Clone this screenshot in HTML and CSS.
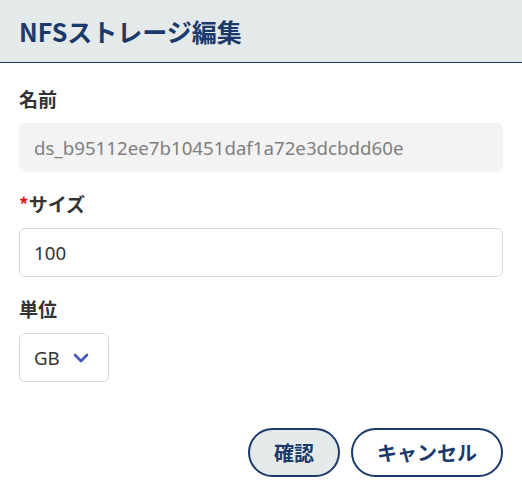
FILE: index.html
```html
<!DOCTYPE html>
<html lang="ja">
<head>
<meta charset="utf-8">
<title>NFSストレージ編集</title>
<link rel="stylesheet" href="styles.css">
</head>
<body>
<div class="dialog">
  <header class="dialog-header">
    <h1 class="dialog-title">NFSストレージ編集</h1>
  </header>
  <main class="dialog-body">
    <div class="field">
      <label class="field-label">名前</label>
      <div class="input input-disabled">ds_b95112ee7b10451daf1a72e3dcbdd60e</div>
    </div>
    <div class="field">
      <label class="field-label"><span class="required">*</span>サイズ</label>
      <div class="input">100</div>
    </div>
    <div class="field">
      <label class="field-label">単位</label>
      <div class="select">
        <span class="select-value">GB</span>
        <svg class="chevron" width="16" height="10" viewBox="0 0 16 10"><path d="M2 2 L8 8 L14 2" fill="none" stroke="#4357b8" stroke-width="2.6" stroke-linecap="round" stroke-linejoin="round"/></svg>
      </div>
    </div>
  </main>
  <footer class="dialog-footer">
    <button class="btn btn-primary">確認</button>
    <button class="btn">キャンセル</button>
  </footer>
</div>
</body>
</html>
```
FILE: styles.css
```css
html, body {
  margin: 0;
  padding: 0;
  background: #ffffff;
}
body {
  font-family: "Noto Sans", "Noto Sans CJK JP", sans-serif;
  color: #333333;
}
.dialog {
  width: 522px;
}
.dialog-header {
  height: 62px;
  background: #e4e9ea;
  border-bottom: 1px solid #1b3a6b;
  display: flex;
  align-items: center;
  padding: 0 19px;
}
.dialog-title {
  margin: 0;
  font-family: "Noto Sans CJK JP", sans-serif;
  font-size: 25px;
  font-weight: 700;
  color: #1b3a6b;
  letter-spacing: 0;
}
.dialog-body {
  padding: 24px 19px 0;
  display: flex;
  flex-direction: column;
  gap: 20px;
}
.field {
  display: flex;
  flex-direction: column;
  align-items: flex-start;
  gap: 12px;
}
.field-label {
  font-family: "Noto Sans CJK JP", sans-serif;
  font-size: 19px;
  font-weight: 700;
  line-height: 24px;
  color: #333333;
}
.required {
  color: #e8141e;
}
.input {
  box-sizing: border-box;
  width: 484px;
  height: 49px;
  border: 1px solid #d9d9d9;
  border-radius: 6px;
  padding: 0 14px;
  display: flex;
  align-items: center;
  font-size: 18.7px;
  color: #333333;
}
.input-disabled {
  background: #f3f3f3;
  border-color: #f3f3f3;
  color: #7f7f7f;
}
.select {
  box-sizing: border-box;
  width: 90px;
  height: 49px;
  border: 1px solid #d9d9d9;
  border-radius: 6px;
  padding: 0 14px;
  display: flex;
  align-items: center;
  gap: 13px;
  font-size: 18.7px;
}
.chevron {
  display: block;
}
.dialog-footer {
  display: flex;
  justify-content: flex-end;
  gap: 11px;
  padding: 46px 19px 0;
}
.btn {
  box-sizing: border-box;
  height: 49px;
  padding: 0 24px;
  border: 2px solid #1b3a6b;
  border-radius: 25px;
  background: #ffffff;
  font-family: "Noto Sans CJK JP", sans-serif;
  font-size: 20px;
  font-weight: 700;
  color: #1b3a6b;
}
.btn-primary {
  background: #e4e9ea;
}
```
